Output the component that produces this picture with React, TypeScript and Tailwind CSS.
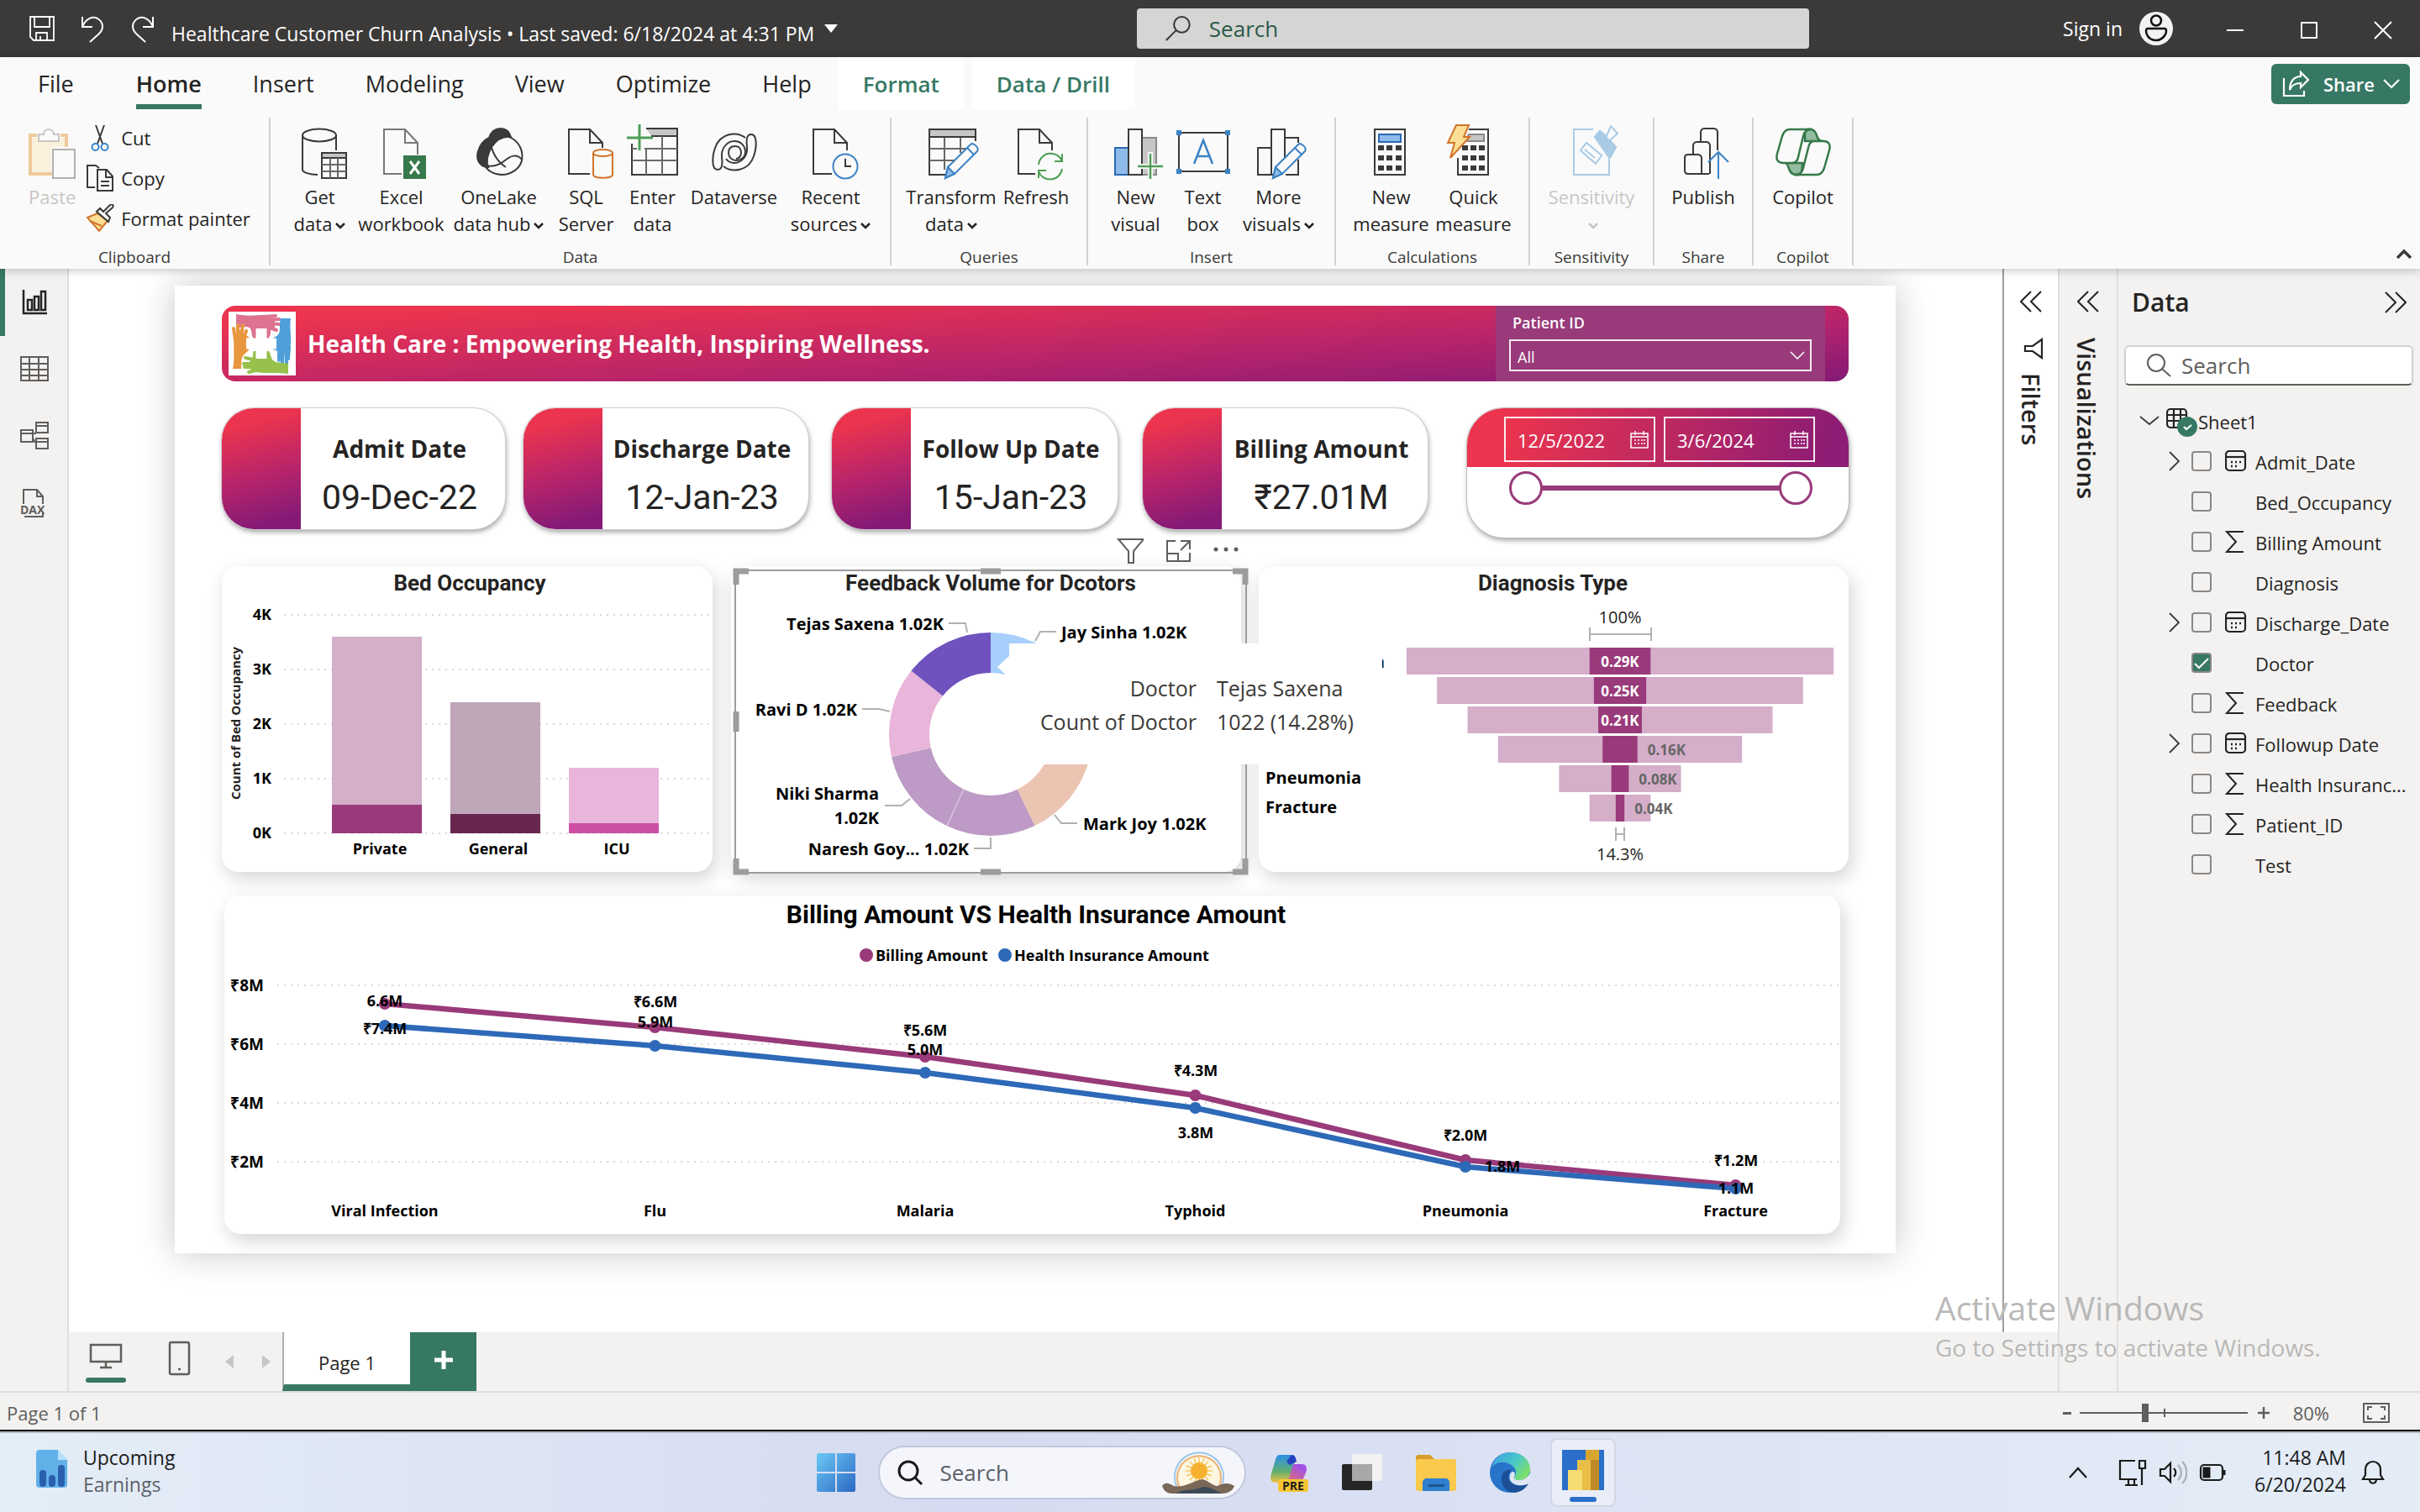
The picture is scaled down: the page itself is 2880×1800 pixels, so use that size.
import React from "react";

type Kids = { children: React.ReactNode };
const INK = "#3b3a39";
const BLUE = "#3b82c4";
const GREEN = "#377865";

/* ---------- ribbon icons, all on a 64 x 64 grid ---------- */

function Big({ children }: Kids) {
  return (
    <svg viewBox="0 0 64 64" className="h-16 w-16 shrink-0 overflow-visible" fill="none" stroke={INK} strokeWidth="2" aria-hidden="true">
      {children}
    </svg>
  );
}

const DocPath = ({ stroke = INK }: { stroke?: string }) => (
  <g stroke={stroke}>
    <path d="M32 57H11V4h25l15 16v14" />
    <path d="M36 4v16h15" />
  </g>
);

const Pencil = () => (
  <g stroke={BLUE}>
    <path d="M25 62l3-13 27-27c3-3 11 4 8 8L36 57z" fill="#fafafa" />
    <path d="M25 62l3-13 8 8z" fill="#8ebbe8" />
    <path d="M51 26l8 8" />
  </g>
);

const Icons = {
  paste: (
    <Big>
      <path d="M14 11H6v46h26M42 11h7v14" stroke="#f0c99b" strokeWidth="4" />
      <path d="M8 14h39v11H31v30H8z" fill="#faf0dc" stroke="none" />
      <path d="M16 18v-8h6c0-8 12-8 12 0h6v8z" fill="#fafafa" stroke="#c8c6c4" />
      <path d="M33 28h26v34H33z" stroke="#b3b0ad" fill="#fafafa" />
    </Big>
  ),
  getData: (
    <Big>
      <ellipse cx="31" cy="11" rx="20" ry="7.5" />
      <path d="M11 11v41c0 3 8 6 18 6M51 11v18" />
      <rect x="34" y="32" width="29" height="30" fill="#fafafa" />
      <rect x="34" y="32" width="29" height="6" fill="#c8c6c4" />
      <path d="M34 46h29M34 54h29M44 38v24M53 38v24" stroke="#6b6967" />
    </Big>
  ),
  excel: (
    <Big>
      <DocPath stroke="#797775" />
      <rect x="34" y="35" width="27" height="28" fill="#36794a" stroke="none" />
      <path d="M42 42l11 15M53 42L42 57" stroke="#fff" strokeWidth="3" />
    </Big>
  ),
  oneLake: (
    <Big>
      <path d="M20 14C23 5 29 3 34 3c6 0 10 4 12 10-9-1-17 3-23 12-5 9-7 17-4 24C9 49 4 40 7 30c2-7 7-13 13-16z" fill={INK} />
      <path d="M22 22C28 13 40 10 48 15c9 6 13 16 11 26-2 9-12 17-24 17-9 0-17-5-20-11" />
      <path d="M22 18c0 11 7 24 18 31M16 47c7 2 16 0 23-6 6-5 14-9 20-1" />
    </Big>
  ),
  sql: (
    <Big>
      <path d="M36 57H11V4h25l15 16v6M36 4v16h15" />
      <g stroke="#d2742a">
        <path d="M40 32v26c0 5 23 5 23 0V32" fill="#fafafa" />
        <ellipse cx="51.500" cy="32" rx="11.500" ry="4" fill="#fafafa" />
      </g>
    </Big>
  ),
  enterData: (
    <Big>
      <path d="M24 3h37v9H30" fill="#c8c6c4" />
      <path d="M7 21v37h54V4" />
      <path d="M22 27h39M7 41h54M24 28v30M43 12v46M7 27h6" stroke="#6b6967" />
      <path d="M16-2v31M1 14h31" stroke="#4f9e56" strokeWidth="3" />
    </Big>
  ),
  dataverse: (
    <Big>
      <path d="M45 14C35 6 15 8 9 26c-4 12-4 26 3 26 6 0 6-8 5-15-1-10 6-19 15-19 8 0 13 6 13 13 0 6-5 10-11 10-5 0-9-4-9-9s3-8 8-8" />
      <path d="M19 48c10 8 30 6 36-12 4-12 4-26-3-26-6 0-6 8-5 15 1 10-6 19-15 19-4 0-8-2-10-5" />
      <path d="M33 24c5 0 7 4 7 8s-3 7-6 7" />
    </Big>
  ),
  recent: (
    <Big>
      <path d="M33 57H11V4h25l15 16v9M36 4v16h15" />
      <circle cx="49" cy="48" r="14.500" stroke={BLUE} />
      <path d="M49 39v9h7" />
    </Big>
  ),
  transform: (
    <Big>
      <path d="M25 58H6V12M61 12v6" />
      <path d="M6 27h44M6 41h30M24 12v40M43 12v20" stroke="#6b6967" />
      <rect x="6" y="4" width="55" height="9" fill="#c8c6c4" />
      <Pencil />
    </Big>
  ),
  refresh: (
    <Big>
      <path d="M31 57H11V4h25l15 16v9M36 4v16h15" />
      <g stroke="#4f9e56">
        <path d="M35 46a14.500 14.500 0 0 1 28-4M63 33v9h-9M63 51a14.500 14.500 0 0 1-28 3M35 62v-9h9" />
      </g>
    </Big>
  ),
  newVisual: (
    <Big>
      <rect x="39" y="14" width="17" height="44" fill="#c8c6c4" stroke="#8a8886" />
      <rect x="7" y="26" width="16" height="32" fill="#8ebbe8" stroke="#2b68b8" />
      <rect x="23" y="4" width="16" height="54" fill="#fafafa" />
      <path d="M49 31v32M35 48h30" stroke="#fafafa" strokeWidth="6" />
      <path d="M49 33v30M34 48h30" stroke="#4f9e56" strokeWidth="2.500" />
    </Big>
  ),
  textBox: (
    <Big>
      <rect x="3" y="8" width="58" height="46" />
      <g fill={BLUE} stroke="none">
        <path d="M0 5h6v6H0zM58 5h6v6h-6zM0 51h6v6H0zM58 51h6v6h-6z" />
      </g>
      <path d="M21 45L32 17l11 28M25 36h14" stroke={BLUE} strokeWidth="2.500" />
    </Big>
  ),
  moreVisuals: (
    <Big>
      <path d="M23 58H7V26h16M23 58V4h16v40M23 58h6M39 14h16v6M55 40v18H40" />
      <Pencil />
    </Big>
  ),
  calc: (
    <Big>
      <rect x="12" y="4" width="36" height="54" />
      <rect x="17" y="10" width="26" height="9" fill="#8ebbe8" stroke="#2b68b8" />
      <path d="M16 26h7M26 26h7M37 26h7M16 38h7M26 38h7M37 38h7M16 50h7M26 50h7M37 50h7" strokeWidth="6" />
    </Big>
  ),
  quick: (
    <Big>
      <path d="M26 4h23v54H13V38" />
      <path d="M26 10h18v8H22z" fill="#c8c6c4" stroke="#8a8886" />
      <path d="M18 26h7M28 26h7M38 26h7M18 38h7M28 38h7M38 38h7M18 50h7M28 50h7M38 50h7" strokeWidth="6" />
      <path d="M11-1h15l-6 14h7L4 38l5-18H1z" fill="#fbdf94" stroke="#d2742a" />
    </Big>
  ),
  sensitivity: (
    <Big>
      <g stroke="#a9cbe6">
        <path d="M34 4H11v54h42V34" />
        <path d="M19 29l7-9 18 15-7 10zM24 28l12 10" />
        <path d="M36 13l6-7 8 6 5-12 8 9-9 8 7 8-8 13z" fill="#fafafa" />
        <path d="M36 13l6-7 19 19-6 12z" fill="#a9cbe6" />
      </g>
    </Big>
  ),
  publish: (
    <Big>
      <path d="M29 57H14c-2 0-4-1-4-4V38c0-2 1-4 4-4h12c2 0 4 2 4 4v19h9M20 34V23c0-2 2-4 4-4h12c2 0 4 2 4 4v34M29 19V7c0-2 2-4 4-4h12c2 0 4 2 4 4v22" />
      <path d="M50 63V31M38 43l12-12 12 12" stroke={BLUE} />
    </Big>
  ),
  copilot: (
    <Big>
      <g stroke="#36794a" strokeWidth="2.500">
        <path d="M34 5c8-3 12 0 14 6 1 4 4 8 8 7H34z" fill="#93bda0" />
        <path d="M30 57c-8 3-13 0-15-6-1-4-3-8-6-7h22z" fill="#93bda0" />
        <path d="M16 4h26c-6 0-9 3-10 8l-6 25c-1 5-3 7-7 7H8c-6 0-9-4-7-11l6-21c2-6 5-8 9-8z" fill="#fafafa" />
        <path d="M48 58H22c6 0 9-3 10-8l6-24c1-5 3-8 7-8h11c6 0 9 4 7 11l-6 21c-2 6-5 8-9 8z" fill="#fafafa" />
      </g>
    </Big>
  ),
};

const Caret = () => (
  <svg viewBox="0 0 12 8" className="ml-1 inline-block h-2 w-3" fill="none" stroke="currentColor" strokeWidth="2.500" aria-hidden="true">
    <path d="M1 1l5 5 5-5" />
  </svg>
);

function RibbonButton({ icon, top, bottom, caret, width, disabled }: { icon: React.ReactNode; top: string; bottom?: string; caret?: boolean; width: string; disabled?: boolean }) {
  return (
    <button type="button" disabled={disabled} className={`${width} flex shrink-0 flex-col items-center pt-2.5 text-[22px] leading-8 whitespace-nowrap ${disabled ? "text-[#c8c6c4]" : "text-[#252423]"}`}>
      {icon}
      <span className="mt-1">{top}</span>
      <span>
        {bottom}
        {caret && <Caret />}
      </span>
    </button>
  );
}

function Group({ label, width, children }: Kids & { label: string; width: string }) {
  return (
    <section aria-label={label} className={`${width} flex h-44 shrink-0 flex-col border-r-2 border-[#d2d0ce]`}>
      <div className="flex flex-1 justify-center">{children}</div>
      <div className="h-6 text-center text-[19px] leading-7 text-[#3b3a39]">{label}</div>
    </section>
  );
}

function TitleBar() {
  return (
    <header className="flex h-[68px] shrink-0 items-center bg-[#3b3a39] text-[23px] text-white">
      <div className="flex flex-[1342] items-center pl-8">
        <button type="button" aria-label="Save" className="mr-6">
          <svg viewBox="0 0 36 36" className="size-9" fill="none" stroke="white" strokeWidth="1.800">
            <path d="M4 4h28v28H8l-4-4zM9 4v12h18V4M11 32v-9h13v9M16 32v-5" />
          </svg>
        </button>
        <button type="button" aria-label="Undo" className="mr-6">
          <svg viewBox="0 0 36 36" className="size-9" fill="none" stroke="white" strokeWidth="2">
            <path d="M6 4v12h12M6 16C10 6 18 3 24 6c7 4 8 12 2 18L15 34" />
          </svg>
        </button>
        <button type="button" aria-label="Redo">
          <svg viewBox="0 0 36 36" className="size-9" fill="none" stroke="white" strokeWidth="2">
            <path d="M30 4v12H18M30 16C26 6 18 3 12 6c-7 4-8 12-2 18l11 10" />
          </svg>
        </button>
        <h1 className="ml-4 pt-3 whitespace-nowrap">Healthcare Customer Churn Analysis&nbsp;•&nbsp;Last saved: 6/18/2024 at 4:31 PM</h1>
        <svg viewBox="0 0 16 10" className="ml-3 h-2.5 w-4" fill="white" aria-hidden="true">
          <path d="M0 0h16L8 10z" />
        </svg>
      </div>
      <label className="flex h-12 w-[800px] items-center rounded-sm bg-[#d5d5d3] pl-8">
        <svg viewBox="0 0 36 36" className="size-9" fill="none" stroke="#3b3a39" strokeWidth="2.200" aria-hidden="true">
          <circle cx="23" cy="13" r="10" />
          <path d="M16 20L3 33" />
        </svg>
        <input aria-label="Search" placeholder="Search" className="ml-5 w-full bg-transparent text-[26px] outline-none placeholder:text-[#2c5a4c]" />
      </label>
      <div className="flex flex-[738] items-center justify-end">
        <button type="button" className="mr-[30px] flex items-center gap-5">
          Sign in
          <svg viewBox="0 0 40 40" className="size-10" fill="none" stroke="#111" strokeWidth="2.500" aria-hidden="true">
            <circle cx="20" cy="20" r="20" fill="#f3f2f1" stroke="none" />
            <circle cx="20" cy="10.500" r="6" />
            <path d="M10 20h20c3 0 2 5 1 7-3 5-6 7-11 7s-9-2-11-7c-1-2-2-7 1-7z" />
          </svg>
        </button>
        {[
          ["Minimize", "M10 20h20"],
          ["Restore", "M11 11h18v18H11z"],
          ["Close", "M10 10l20 20M30 10L10 30"],
        ].map(([name, d]) => (
          <button key={name} type="button" aria-label={name} className="flex w-[88px] justify-center pt-1">
            <svg viewBox="0 0 40 40" className="size-10" fill="none" stroke="white" strokeWidth="2" strokeLinejoin="round">
              <path d={d} />
            </svg>
          </button>
        ))}
      </div>
    </header>
  );
}

const tabs = ["File", "Home", "Insert", "Modeling", "View", "Optimize", "Help"];

function Ribbon() {
  return (
    <div className="z-10 flex h-[252px] shrink-0 flex-col bg-[#fafafa] shadow-[0_2px_10px_rgba(0,0,0,0.22)]">
      <nav className="flex h-[62px] items-stretch pl-4 text-[27px] text-[#252423]">
        {tabs.map((t) => (
          <button key={t} type="button" className={`px-[29px] ${t === "File" ? "mr-4" : t === "Help" ? "mr-0.5" : "mr-[3px]"} ${t === "Home" ? "font-semibold" : ""}`}>
            <span className={`flex h-full items-center border-b-[6px] pt-2 ${t === "Home" ? "border-[#377865]" : "border-transparent"}`}>{t}</span>
          </button>
        ))}
        <button type="button" className="mr-2 bg-white px-[30px] pt-0.5 text-[26px] font-semibold text-[#377865]">Format</button>
        <button type="button" className="bg-white px-[30px] pt-0.5 text-[26px] font-semibold text-[#377865]">Data / Drill</button>
        <button type="button" className="mt-2 mr-3 ml-auto flex h-12 items-center rounded-md bg-[#377865] px-3 text-[22px] font-semibold text-white">
          <svg viewBox="0 0 36 36" className="mr-3.5 size-9" fill="none" stroke="white" strokeWidth="2.200" aria-hidden="true">
            <path d="M3 11v21h24v-6" />
            <path d="M23 4l9 9-9 9v-5c-8 0-11 3-13 8 0-10 5-16 13-16z" />
          </svg>
          Share
          <svg viewBox="0 0 20 12" className="ml-2.5 h-3 w-5" fill="none" stroke="white" strokeWidth="2.200" aria-hidden="true">
            <path d="M1 1l9 9 9-9" />
          </svg>
        </button>
      </nav>
      <div className="flex flex-1 items-start pt-2.5">
        <Group label="Clipboard" width="w-[322px]">
          <RibbonButton icon={Icons.paste} top="Paste" width="w-20" disabled />
          <div className="flex flex-col text-[22px] text-[#252423]">
            <button type="button" className="flex h-12 items-center gap-2">
              <svg viewBox="0 0 34 34" className="size-[34px]" fill="none" stroke={INK} strokeWidth="2" aria-hidden="true">
                <path d="M12 2l8 22M22 2l-8 22" />
                <circle cx="11.500" cy="28" r="4" stroke={BLUE} />
                <circle cx="22.500" cy="28" r="4" stroke={BLUE} />
              </svg>
              Cut
            </button>
            <button type="button" className="flex h-12 items-center gap-2">
              <svg viewBox="0 0 34 34" className="size-[34px]" fill="none" stroke={INK} strokeWidth="2" aria-hidden="true">
                <path d="M11 28H2V2h10l4 3M14 7h11l7 8v17H14zM24 7v9h8M18 21h10M18 26h10" />
              </svg>
              Copy
            </button>
            <button type="button" className="flex h-12 items-center gap-2 whitespace-nowrap">
              <svg viewBox="0 0 34 34" className="size-[34px]" fill="none" stroke={INK} strokeWidth="2" aria-hidden="true">
                <path d="M2 16l12-5 12 9-10 12z" fill="#fbdf94" stroke="#d2742a" />
                <path d="M5 20l14 6" stroke="#d2742a" />
                <path d="M13 9l14 12 2-5-5-5 8-7c2-3-1-5-3-3l-8 8-4-4z" fill="#fafafa" />
              </svg>
              Format painter
            </button>
          </div>
        </Group>
        <Group label="Data" width="w-[739px]">
          <RibbonButton icon={Icons.getData} top="Get" bottom="data" caret width="w-[92px]" />
          <RibbonButton icon={Icons.excel} top="Excel" bottom="workbook" width="w-[102px]" />
          <RibbonButton icon={Icons.oneLake} top="OneLake" bottom="data hub" caret width="w-[130px]" />
          <RibbonButton icon={Icons.sql} top="SQL" bottom="Server" width="w-[78px]" />
          <RibbonButton icon={Icons.enterData} top="Enter" bottom="data" width="w-[80px]" />
          <RibbonButton icon={Icons.dataverse} top="Dataverse" width="w-[114px]" />
          <RibbonButton icon={Icons.recent} top="Recent" bottom="sources" caret width="w-[116px]" />
        </Group>
        <Group label="Queries" width="w-[234px]">
          <RibbonButton icon={Icons.transform} top="Transform" bottom="data" caret width="w-[112px]" />
          <RibbonButton icon={Icons.refresh} top="Refresh" width="w-[90px]" />
        </Group>
        <Group label="Insert" width="w-[295px]">
          <RibbonButton icon={Icons.newVisual} top="New" bottom="visual" width="w-[80px]" />
          <RibbonButton icon={Icons.textBox} top="Text" bottom="box" width="w-[80px]" />
          <RibbonButton icon={Icons.moreVisuals} top="More" bottom="visuals" caret width="w-[100px]" />
        </Group>
        <Group label="Calculations" width="w-[231px]">
          <RibbonButton icon={Icons.calc} top="New" bottom="measure" width="w-[98px]" />
          <RibbonButton icon={Icons.quick} top="Quick" bottom="measure" width="w-[98px]" />
        </Group>
        <Group label="Sensitivity" width="w-[148px]">
          <RibbonButton icon={Icons.sensitivity} top="Sensitivity" caret width="w-[120px]" disabled />
        </Group>
        <Group label="Share" width="w-[118px]">
          <RibbonButton icon={Icons.publish} top="Publish" width="w-[100px]" />
        </Group>
        <Group label="Copilot" width="w-[119px]">
          <RibbonButton icon={Icons.copilot} top="Copilot" width="w-[100px]" />
        </Group>
        <button type="button" aria-label="Collapse the ribbon" className="mr-2.5 mb-3 ml-auto self-end">
          <svg viewBox="0 0 18 12" className="h-3 w-[18px]" fill="none" stroke={INK} strokeWidth="3.500">
            <path d="M1 11l8-8 8 8" />
          </svg>
        </button>
      </div>
    </div>
  );
}

function LeftRail() {
  const icons: [string, React.ReactNode][] = [
    ["Report view", <path key="a" strokeWidth="2.500" d="M5 4v28h28M10 28V16h5v12zM18 28V12h5v16zM26 28V6h5v22z" />],
    ["Table view", <path key="b" d="M2 4h32v28H2zM2 12h32M2 19h32M2 26h32M12 4v28M23 4v28" />],
    ["Model view", <path key="c" d="M2 11h14v14H2zM2 15h14M20 2h14v12H20zM20 6h14M20 21h14v12H20zM20 25h14M16 15h4M16 21l4 6" />],
    ["DAX query view", <g key="d"><path d="M5 19V2h16l7 8v9M21 2v8h7M6 34h22v-6" /><text x="1" y="31" fontSize="14" fontWeight="700" stroke="none" fill="#605e5c">DAX</text></g>],
  ];
  return (
    <nav aria-label="Views" className="flex w-[82px] shrink-0 flex-col border-r-2 border-[#e1dfdd] bg-[#f3f2f1]">
      {icons.map(([name, d], i) => (
        <button key={name} type="button" aria-label={name} className={`flex h-20 items-center justify-center border-l-[6px] pr-1 pb-0.5 ${i === 0 ? "border-[#377865]" : "border-transparent"}`}>
          <svg viewBox="0 0 36 36" className="size-9 overflow-visible" fill="none" stroke={i === 0 ? "#252423" : "#605e5c"} strokeWidth="2">
            {d}
          </svg>
        </button>
      ))}
    </nav>
  );
}

/* ---------- report visuals ---------- */

const hands = (
  <svg viewBox="0 0 80 76" className="h-[76px] w-20 shrink-0 bg-white" aria-hidden="true">
    <g strokeLinecap="round" strokeLinejoin="round" strokeWidth="4" fill="none">
      <path d="M9 3c14 3 24 1 36 1l10 6v10l-5 2c0 4 0 8-3 10H30c-3-3-2-8-4-12-4-3-9-2-17 0z" fill="#dd7391" />
      <path d="M42 6l14-1M44 10l16-1M46 14l15 1M46 18l11 4" stroke="#dd7391" />
      <path d="M62 8h12c-2 12 2 24-1 36l-5 6-9-3-6-2V31c3-1 5-2 7-5 2-5 0-11 2-18z" fill="#4f9fd8" />
      <path d="M60 46v12M64 46v16M68 46l1 16M72 42l-1 14" stroke="#4f9fd8" />
      <path d="M71 74V62c-7-2-14 0-18-4-3-3-3-8-5-11H30c-2 4 0 7-3 10l-6 9 12 6c12 2 26 0 38 2z" fill="#97c04c" />
      <path d="M34 58l-14-3M33 62H18M33 66l-14 0M36 69l-12 3" stroke="#97c04c" />
      <path d="M5 68h10c1-8-1-12 3-16 2-3 4-4 6-6V30c-3-2-6-3-8-5l-3-4-6 8c-2 14 1 26-2 39z" fill="#e8973f" />
      <path d="M8 34L6 20M11 30V16M15 30l2-14M18 32l3-9" stroke="#e8973f" />
      <path d="M39 20v36M21 38h36" stroke="white" strokeWidth="13" strokeLinecap="butt" />
    </g>
  </svg>
);

const CalendarIcon = () => (
  <svg viewBox="0 0 22 22" className="size-[22px] shrink-0" fill="none" stroke="white" strokeWidth="1.500" aria-hidden="true">
    <path d="M1 4h20v17H1zM1 8h20M6 1v5M16 1v5M6 11v2M10 11v2M14 11v2M17 11v2M6 15v2M10 15v2M14 15v2M17 15v2" />
  </svg>
);

function Kpi({ title, value, className }: { title: string; value: string; className: string }) {
  return (
    <section className={`${className} flex h-36 overflow-hidden rounded-[38px] bg-white shadow-[0_0_0_1px_#cfcfcf,1px_3px_6px_rgba(0,0,0,0.4)]`}>
      <div className="w-[94px] shrink-0 bg-linear-[165deg] from-[#ec344e] from-15% via-[#b8246a] via-55% to-[#851a76] to-90%" />
      <div className="flex flex-1 flex-col items-center pt-[26px] pr-2 text-[#252423]">
        <h2 className="text-[28px] leading-11 font-bold whitespace-nowrap">{title}</h2>
        <p className="pt-2 font-[Roboto] text-[41px] leading-14">{value}</p>
      </div>
    </section>
  );
}

const thumb =
  "pointer-events-none absolute inset-x-0 h-10 w-full appearance-none bg-transparent [&::-webkit-slider-thumb]:pointer-events-auto [&::-webkit-slider-thumb]:size-10 [&::-webkit-slider-thumb]:appearance-none [&::-webkit-slider-thumb]:rounded-full [&::-webkit-slider-thumb]:border-[3px] [&::-webkit-slider-thumb]:border-[#993a7a] [&::-webkit-slider-thumb]:bg-white";

function DateSlicer() {
  return (
    <section className="ml-[47px] flex h-[154px] flex-[454] flex-col overflow-hidden rounded-[44px] bg-white shadow-[0_0_0_1px_#bdbdbd,1px_3px_6px_rgba(0,0,0,0.4)]">
      <div className="flex h-[70px] items-center justify-center gap-2.5 bg-linear-[100deg] from-[#ec344e] from-10% to-[#8c1c74] to-95% pt-1 pl-1">
        {["12/5/2022", "3/6/2024"].map((d, i) => (
          <label key={d} className="flex h-[54px] w-[180px] items-center border-2 border-white/90 pr-1.5 pl-3.5">
            <input aria-label={i === 0 ? "Start date" : "End date"} defaultValue={d} className="w-full min-w-0 bg-transparent pt-0.5 text-[22px] text-white outline-none" />
            <CalendarIcon />
          </label>
        ))}
      </div>
      <div className="relative mt-[5px] mr-[43px] ml-[50px] h-10">
        <div className="absolute inset-x-5 top-[17px] h-1.5 bg-[#993a7a]" />
        <input type="range" aria-label="Range start" defaultValue={0} className={thumb} />
        <input type="range" aria-label="Range end" defaultValue={100} className={thumb} />
      </div>
    </section>
  );
}

const card = "rounded-[20px] bg-white shadow-[4px_8px_22px_rgba(0,0,0,0.17)]";
const dinTitle = { fontFamily: "Roboto, sans-serif", fontWeight: 700, fill: "#252423", textAnchor: "middle" as const };

function BedOccupancy() {
  const bars = [
    { name: "Private", x: 395, top: 758, split: 958, light: "#d5aeca", dark: "#993a7a" },
    { name: "General", x: 536, top: 836, split: 969, light: "#bfa6b9", dark: "#67274f" },
    { name: "ICU", x: 677, top: 914, split: 980, light: "#e9b5da", dark: "#cc4fa3" },
  ];
  return (
    <section className={`flex-[584] ${card}`}>
      <svg viewBox="264 674 584 364" className="block w-full" role="img" aria-label="Bed Occupancy">
        <text x="559" y="703" fontSize="26" {...dinTitle}>Bed Occupancy</text>
        {["4K", "3K", "2K", "1K", "0K"].map((t, i) => (
          <g key={t}>
            <text x="323" y={738 + i * 65} fontSize="18" fontWeight="700" textAnchor="end">{t}</text>
            <path d={`M338 ${732 + i * 65}H846`} stroke="#dad8d6" strokeWidth="2" strokeDasharray="2 6" />
          </g>
        ))}
        {bars.map((b) => (
          <g key={b.name}>
            <rect x={b.x} y={b.top} width="107" height={b.split - b.top} fill={b.light} />
            <rect x={b.x} y={b.split} width="107" height={992 - b.split} fill={b.dark} />
            <text x={b.x + 57} y="1017" fontSize="18" fontWeight="700" textAnchor="middle">{b.name}</text>
          </g>
        ))}
        <text transform="translate(286 861) rotate(-90)" fontSize="15" fontWeight="700" textAnchor="middle" fill="#252423">Count of Bed Occupancy</text>
      </svg>
    </section>
  );
}

function arc(i: number) {
  const cx = 1179, cy = 874, R = 121, r = 73;
  const p = (rad: number, k: number) => {
    const a = (k * 2 * Math.PI) / 7 - Math.PI / 2;
    return `${(cx + rad * Math.cos(a)).toFixed(1)} ${(cy + rad * Math.sin(a)).toFixed(1)}`;
  };
  return `M${p(R, i)}A${R} ${R} 0 0 1 ${p(R, i + 1)}L${p(r, i + 1)}A${r} ${r} 0 0 0 ${p(r, i)}Z`;
}

function Feedback() {
  const colors = ["#a8cffb", "#a8cffb", "#ecc5b2", "#bd9bc6", "#bd9bc6", "#e9b5da", "#6f52bd"];
  const labels: [number, number, string, "start" | "end"][] = [
    [1123, 750, "Tejas Saxena 1.02K", "end"],
    [1263, 760, "Jay Sinha 1.02K", "start"],
    [1289, 988, "Mark Joy 1.02K", "start"],
    [1020, 852, "Ravi D 1.02K", "end"],
    [1046, 952, "Niki Sharma", "end"],
    [1046, 981, "1.02K", "end"],
    [1153, 1018, "Naresh Goy... 1.02K", "end"],
  ];
  return (
    <section className={`relative ml-[22px] flex-[607] ${card}`}>
      <svg viewBox="870 674 607 364" className="block w-full overflow-visible" role="img" aria-label="Feedback Volume for Dcotors">
        <text x="1179" y="703" fontSize="26" {...dinTitle}>Feedback Volume for Dcotors</text>
        {colors.map((c, i) => (
          <path key={i} d={arc(i)} fill={c} />
        ))}
        <path d="M1147 939l-20 44" stroke="#d9c3de" strokeWidth="1.500" />
        <g fill="none" stroke="#b3b0ad" strokeWidth="2">
          <path d="M1129 742h20l2 11M1257 752h-19l-6 11M1026 844h20l13 3M1053 959h20l10-8M1159 1010h20v-13M1282 980h-19l-8-10" />
        </g>
        {labels.map(([x, y, t, a]) => (
          <text key={t + y} x={x} y={y} fontSize="20" fontWeight="700" textAnchor={a}>{t}</text>
        ))}
        <g fill="none" stroke="#9c9c9c">
          <rect x="875" y="679" width="608" height="360" strokeWidth="2" />
          <path strokeWidth="7" d="M876 696v-16h15M1467 680h15v16M1482 1022v16h-15M891 1038h-15v-16M1167 680h24M1167 1038h24M876 847v24" />
        </g>
      </svg>
      <div className="absolute -top-[38px] left-[453px] flex gap-5">
        <button type="button" aria-label="Filters on visual">
          <svg viewBox="0 0 38 36" className="h-9 w-[38px]" fill="none" stroke="#605e5c" strokeWidth="2">
            <path d="M8 6h30L26 20v14h-6V20z" />
          </svg>
        </button>
        <button type="button" aria-label="Focus mode">
          <svg viewBox="0 0 38 36" className="h-9 w-[38px]" fill="none" stroke="#605e5c" strokeWidth="2">
            <path d="M18 8H8v24h27V22M24 8h11v10M35 8L24 19M8 23h13v9" />
          </svg>
        </button>
        <button type="button" aria-label="More options">
          <svg viewBox="0 0 38 36" className="h-9 w-[38px]" fill="#605e5c">
            <circle cx="8" cy="18" r="2.500" />
            <circle cx="20" cy="18" r="2.500" />
            <circle cx="32" cy="18" r="2.500" />
          </svg>
        </button>
      </div>
      <div role="tooltip" className="absolute top-[92px] left-[331px] z-10 flex h-36 w-[444px] items-center bg-white text-[25px] leading-10 text-[#3b3a39]">
        <svg viewBox="0 0 15 28" className="absolute top-3.5 -left-3.5 h-7 w-[15px]" fill="white" aria-hidden="true">
          <path d="M15 0v28L0 14z" />
        </svg>
        <dl className="grid w-full grid-cols-[223px_1fr] gap-x-6 pt-0.5 whitespace-nowrap">
          <dt className="text-right">Doctor</dt>
          <dd>Tejas Saxena</dd>
          <dt className="text-right">Count of Doctor</dt>
          <dd>1022 (14.28%)</dd>
        </dl>
      </div>
    </section>
  );
}

function Diagnosis() {
  const rows: [number, string][] = [[7, "0.29K"], [6, "0.25K"], [5, "0.21K"], [4, "0.16K"], [2, "0.08K"], [1, "0.04K"]];
  return (
    <section className={`ml-[21px] flex-[702] ${card}`}>
      <svg viewBox="1498 674 702 364" className="block w-full" role="img" aria-label="Diagnosis Type">
        <text x="1848" y="703" fontSize="26" {...dinTitle}>Diagnosis Type</text>
        <text x="1928" y="742" fontSize="20" textAnchor="middle" fill="#252423">100%</text>
        <path d="M1892 747v16M1965 747v16M1892 755h73M1923 985v16M1933 985v16M1923 993h10" stroke="#b3b0ad" strokeWidth="2" />
        {rows.map(([n, t], i) => {
          const w = n * 72.6, d = w / 7, y = 771 + i * 35;
          return (
            <g key={t}>
              <rect x={1928 - w / 2} y={y} width={w} height="32" fill="#d5aeca" />
              <rect x={1928 - d / 2} y={y} width={d} height="32" fill="#993a7a" />
              <text x={i < 3 ? 1928 : 1940 + d / 2} y={y + 23} fontSize="17" fontWeight="700" textAnchor={i < 3 ? "middle" : "start"} fill={i < 3 ? "white" : "#666666"}>{t}</text>
            </g>
          );
        })}
        <g fontSize="20" fontWeight="700">
          <text x="1648" y="795" textAnchor="end">Viral Infection</text>
          <text x="1506" y="933">Pneumonia</text>
          <text x="1506" y="968">Fracture</text>
        </g>
        <text x="1928" y="1024" fontSize="20" textAnchor="middle" fill="#252423">14.3%</text>
      </svg>
    </section>
  );
}

function BillingLines() {
  const cats = ["Viral Infection", "Flu", "Malaria", "Typhoid", "Pneumonia", "Fracture"];
  const x = (i: number) => 458 + i * 321.5;
  const billing = [1195, 1223, 1258, 1304, 1381, 1411];
  const health = [1221, 1245, 1277, 1319, 1389, 1415];
  const labels: [number, number, string][] = [
    [458, 1198, "6.6M"], [458, 1231, "₹7.4M"], [780, 1199, "₹6.6M"], [780, 1223, "5.9M"], [1101, 1233, "₹5.6M"], [1101, 1256, "5.0M"],
    [1423, 1281, "₹4.3M"], [1423, 1355, "3.8M"], [1744, 1358, "₹2.0M"], [1788, 1395, "1.8M"], [2066, 1388, "₹1.2M"], [2066, 1421, "1.1M"],
  ];
  return (
    <section className={`mt-7 mr-2.5 ml-[3px] ${card}`}>
      <svg viewBox="267 1066 1923 403" className="block w-full" role="img" aria-label="Billing Amount VS Health Insurance Amount">
        <text x="1233" y="1099" fontSize="30" {...dinTitle} fill="black">Billing Amount VS Health Insurance Amount</text>
        <circle cx="1031" cy="1137" r="8" fill="#993a7a" />
        <circle cx="1196" cy="1137" r="8" fill="#2e69b8" />
        {["₹8M", "₹6M", "₹4M", "₹2M"].map((t, i) => (
          <g key={t}>
            <text x="314" y={1180 + i * 70} fontSize="19" fontWeight="700" textAnchor="end">{t}</text>
            <path d={`M330 ${1173 + i * 70}H2188`} stroke="#dad8d6" strokeWidth="2" strokeDasharray="2 6" />
          </g>
        ))}
        {[[billing, "#993a7a"] as const, [health, "#2e69b8"] as const].map(([ys, c]) => (
          <g key={c} fill={c}>
            <polyline points={ys.map((y, i) => `${x(i)},${y}`).join(" ")} fill="none" stroke={c} strokeWidth="6.500" strokeLinejoin="round" />
            {ys.map((y, i) => (
              <circle key={i} cx={x(i)} cy={y} r="7" />
            ))}
          </g>
        ))}
        <g fontSize="18" fontWeight="700">
          <text x="1042" y="1144">Billing Amount</text>
          <text x="1207" y="1144">Health Insurance Amount</text>
          {labels.map(([lx, ly, t]) => (
            <text key={t} x={lx} y={ly} textAnchor="middle">{t}</text>
          ))}
          {cats.map((c, i) => (
            <text key={c} x={x(i)} y="1448" textAnchor="middle">{c}</text>
          ))}
        </g>
      </svg>
    </section>
  );
}

function Report() {
  return (
    <main className="flex-1 bg-white pt-5 pr-[127px] pb-[94px] pl-[126px]">
      <div className="h-full bg-white px-14 pt-6 shadow-[0_0_40px_rgba(0,0,0,0.22)]">
        <div className="flex h-[90px] items-stretch rounded-2xl bg-linear-[177deg] from-[#ec344e] from-10% via-[#b8246a] via-60% to-[#851a76] to-100% pr-7 pl-2">
          <div className="flex items-center">
            {hands}
            <h1 className="ml-3.5 text-[28px] font-bold whitespace-nowrap text-white">Health Care : Empowering Health, Inspiring Wellness.</h1>
          </div>
          <label className="ml-auto flex w-[392px] flex-col bg-[#993a7a] px-4 pt-1 text-[18px] font-semibold text-white">
            <span className="pl-1 leading-8">Patient ID</span>
            <span className="relative mt-1 block">
              <select className="h-[38px] w-full appearance-none border-2 border-white/90 bg-transparent pt-1 pl-2 text-[18px] font-normal">
                <option>All</option>
              </select>
              <svg viewBox="0 0 18 10" className="absolute top-3.5 right-2 h-2.5 w-[18px]" fill="none" stroke="white" strokeWidth="1.500" aria-hidden="true">
                <path d="M1 1l8 8 8-8" />
              </svg>
            </span>
          </label>
        </div>
        <div className="mt-8 flex items-start">
          <Kpi title="Admit Date" value="09-Dec-22" className="flex-[337]" />
          <Kpi title="Discharge Date" value="12-Jan-23" className="ml-[22px] flex-[339]" />
          <Kpi title="Follow Up Date" value="15-Jan-23" className="ml-7 flex-[340]" />
          <Kpi title="Billing Amount" value="₹27.01M" className="ml-[30px] flex-[339]" />
          <DateSlicer />
        </div>
        <div className="mt-[34px] flex items-start">
          <BedOccupancy />
          <Feedback />
          <Diagnosis />
        </div>
        <BillingLines />
      </div>
    </main>
  );
}

function Chevrons({ flip }: { flip?: boolean }) {
  return (
    <svg viewBox="0 0 26 26" className={`size-[26px] ${flip ? "rotate-180" : ""}`} fill="none" stroke="#252423" strokeWidth="2" aria-hidden="true">
      <path d="M13 1L1 13l12 12M25 1L13 13l12 12" />
    </svg>
  );
}

const fields: [string, "date" | "sum" | ""][] = [
  ["Admit_Date", "date"], ["Bed_Occupancy", ""], ["Billing Amount", "sum"], ["Diagnosis", ""], ["Discharge_Date", "date"], ["Doctor", ""],
  ["Feedback", "sum"], ["Followup Date", "date"], ["Health Insuranc...", "sum"], ["Patient_ID", "sum"], ["Test", ""],
];

function DataPane() {
  return (
    <aside aria-label="Data" className="w-[361px] shrink-0 border-l-2 border-[#e1dfdd] bg-[#f3f2f1] text-[22px] text-[#252423]">
      <div className="flex items-center pt-4 pr-4 pl-4">
        <h2 className="flex-1 text-[30px] leading-12 font-semibold">Data</h2>
        <button type="button" aria-label="Collapse pane"><Chevrons flip /></button>
      </div>
      <label className="mt-[27px] mr-2 ml-[7px] flex h-12 items-center rounded-md border-2 border-b-[#605e5c] border-[#d2d0ce] bg-white pl-6">
        <svg viewBox="0 0 30 30" className="size-[30px] shrink-0" fill="none" stroke="#605e5c" strokeWidth="2" aria-hidden="true">
          <circle cx="12" cy="12" r="10" />
          <path d="M19 19l10 9" />
        </svg>
        <input aria-label="Search fields" placeholder="Search" className="ml-3 w-full min-w-0 bg-transparent text-[26px] outline-none placeholder:text-[#605e5c]" />
      </label>
      <div className="mt-[18px] flex h-12 items-center pl-[25px]">
        <svg viewBox="0 0 24 12" className="h-3 w-6" fill="none" stroke="#3b3a39" strokeWidth="1.800" aria-hidden="true">
          <path d="M1 1l11 9L23 1" />
        </svg>
        <svg viewBox="0 0 38 38" className="ml-2 size-[38px]" fill="none" stroke="#252423" strokeWidth="2.200" aria-hidden="true">
          <rect x="1" y="5" width="23" height="22" rx="4" />
          <path d="M1 12h23M1 19h23M9 5v22M17 5v22" />
          <circle cx="25" cy="26" r="12" fill={GREEN} stroke="none" />
          <path d="M21 26l3 3 6-5" stroke="white" />
        </svg>
        <span className="pt-0.5">Sheet1</span>
      </div>
      <ul>
        {fields.map(([name, kind]) => (
          <li key={name} className="flex h-[48px] items-center pl-[60px]">
            <span className="w-[27px] shrink-0">
              {kind === "date" && (
                <svg viewBox="0 0 14 24" className="h-6 w-3.5" fill="none" stroke="#3b3a39" strokeWidth="1.800" aria-hidden="true">
                  <path d="M1 1l11 11L1 23" />
                </svg>
              )}
            </span>
            <label className="flex items-center whitespace-nowrap">
              <span className="relative flex size-6 shrink-0">
                <input type="checkbox" defaultChecked={name === "Doctor"} className="size-6 appearance-none rounded-sm border-2 border-[#8a8886] checked:bg-[#377865]" />
                {name === "Doctor" && (
                  <svg viewBox="0 0 24 24" className="pointer-events-none absolute inset-0 size-6" fill="none" stroke="white" strokeWidth="2" aria-hidden="true">
                    <path d="M4 13l5 5L20 7" />
                  </svg>
                )}
              </span>
              <span className="ml-4 w-9 shrink-0">
                {kind === "sum" && (
                  <svg viewBox="0 0 24 26" className="h-[26px] w-6" fill="none" stroke="#252423" strokeWidth="2" aria-hidden="true">
                    <path d="M22 1H2l11 12L2 25h20" />
                  </svg>
                )}
                {kind === "date" && (
                  <svg viewBox="0 0 26 26" className="size-[26px]" fill="none" stroke="#252423" strokeWidth="2.200" aria-hidden="true">
                    <rect x="1" y="1" width="23" height="23" rx="4" />
                    <path d="M1 8h23" />
                    <path d="M7 14h2M12 14h2M17 14h2M7 19h2M12 19h2" strokeWidth="2.500" />
                  </svg>
                )}
              </span>
              <span className="pt-0.5">{name}</span>
            </label>
          </li>
        ))}
      </ul>
    </aside>
  );
}

function PageTabs() {
  return (
    <div className="flex h-[70px] shrink-0 items-stretch bg-[#f3f2f1]">
      <button type="button" aria-label="Desktop layout" className="ml-5 flex w-12 flex-col items-center pt-3">
        <svg viewBox="0 0 40 32" className="h-8 w-10" fill="none" stroke="#605e5c" strokeWidth="2.500" aria-hidden="true">
          <path d="M2 3h36v20H2zM20 23v6M13 30h14" />
        </svg>
        <span className="mt-2.5 h-1.5 w-full rounded-full bg-[#377865]" />
      </button>
      <button type="button" aria-label="Mobile layout" className="ml-[50px]">
        <svg viewBox="0 0 28 42" className="mb-2 h-[42px] w-7" fill="none" stroke="#605e5c" strokeWidth="2.500" aria-hidden="true">
          <rect x="2" y="2" width="23" height="38" rx="2" />
          <path d="M12 34h3" />
        </svg>
      </button>
      <button type="button" aria-label="Previous page" className="ml-10" disabled>
        <svg viewBox="0 0 10 16" className="h-4 w-2.5" fill="#c8c6c4"><path d="M10 0v16L0 8z" /></svg>
      </button>
      <button type="button" aria-label="Next page" className="mr-3.5 ml-[34px]" disabled>
        <svg viewBox="0 0 10 16" className="h-4 w-2.5" fill="#c8c6c4"><path d="M0 0v16l10-8z" /></svg>
      </button>
      <button type="button" className="w-[152px] border-b-8 border-l-2 border-b-[#377865] border-l-[#b3b0ad] bg-white pt-2.5 text-[22px] text-[#252423]">Page 1</button>
      <button type="button" aria-label="New page" className="flex w-[79px] justify-center bg-[#377865] pt-[22px]">
        <svg viewBox="0 0 22 22" className="size-[22px]" stroke="white" strokeWidth="5"><path d="M11 0v22M0 11h22" /></svg>
      </button>
    </div>
  );
}

function StatusBar() {
  return (
    <footer className="flex h-[48px] shrink-0 items-center border-t-2 border-b-2 border-t-[#e1dfdd] border-b-black bg-[#f3f2f1] pt-1 pr-9 pl-2 text-[22px] text-[#605e5c]">
      <span className="flex-1">Page 1 of 1</span>
      <button type="button" aria-label="Zoom out" className="mr-2.5 h-[3px] w-2.5 bg-[#605e5c]" />
      <span className="relative flex h-6 w-[200px] items-center">
        <span className="absolute inset-x-0 h-0.5 bg-[#605e5c]" />
        <span className="absolute left-1/2 h-2.5 w-0.5 bg-[#605e5c]" />
        <input type="range" aria-label="Zoom" min={10} max={180} defaultValue={76} className="absolute h-6 w-full appearance-none bg-transparent [&::-webkit-slider-thumb]:h-[22px] [&::-webkit-slider-thumb]:w-2 [&::-webkit-slider-thumb]:appearance-none [&::-webkit-slider-thumb]:bg-[#605e5c]" />
      </span>
      <button type="button" aria-label="Zoom in" className="mr-7 ml-3">
        <svg viewBox="0 0 14 14" className="size-3.5" stroke="#605e5c" strokeWidth="2.500"><path d="M7 0v14M0 7h14" /></svg>
      </button>
      <span>80%</span>
      <button type="button" aria-label="Fit to page" className="ml-10">
        <svg viewBox="0 0 32 26" className="h-[26px] w-8" fill="none" stroke="#605e5c" strokeWidth="2">
          <path d="M1 2h30v22H1zM6 10V6h5M21 6h5v4M26 16v4h-5M11 20H6v-4" />
        </svg>
      </button>
    </footer>
  );
}

function TaskIcon({ name, children }: Kids & { name: string }) {
  return (
    <button type="button" aria-label={name} className="flex w-22 items-center justify-center">
      <svg viewBox="0 0 48 48" className="size-12 overflow-visible" aria-hidden="true">{children}</svg>
    </button>
  );
}

function Taskbar() {
  return (
    <footer className="flex h-[96px] shrink-0 items-stretch border-t-2 border-[#b4b8c4] bg-linear-90 from-[#e4eef7] via-[#d6dbf1] via-40% to-[#e4edf7] text-[23px] text-[#1b1b1b]">
      <svg width="0" height="0" className="absolute" aria-hidden="true">
        <defs>
          <linearGradient id="win" x1="0" y1="0" x2="1" y2="1"><stop offset="0" stopColor="#6cc8f5" /><stop offset="1" stopColor="#2b69c4" /></linearGradient>
          <linearGradient id="edge" x1="0" y1="0" x2="1" y2="0.600"><stop offset="0" stopColor="#3a9de0" /><stop offset="0.600" stopColor="#4cc8c8" /><stop offset="1" stopColor="#7be069" /></linearGradient>
          <linearGradient id="cop" x1="0" y1="0" x2="0" y2="1"><stop offset="0" stopColor="#2b8ee8" /><stop offset="0.600" stopColor="#62b070" /><stop offset="1" stopColor="#f0c040" /></linearGradient>
          <linearGradient id="cop2" x1="0.500" y1="0" x2="0" y2="1"><stop offset="0" stopColor="#a050e8" /><stop offset="1" stopColor="#f07858" /></linearGradient>
        </defs>
      </svg>
      <button type="button" className="flex flex-1 items-center pl-[43px] text-left leading-8">
        <svg viewBox="0 0 38 46" className="mr-[18px] mb-2 h-[46px] w-[38px]" aria-hidden="true">
          <path d="M4 0h22l11 12v29a4 4 0 0 1-4 4H4a4 4 0 0 1-4-4V4a4 4 0 0 1 4-4z" fill="#62b0e8" />
          <path d="M26 0l11 12H26z" fill="#b8e2fb" />
          <path d="M8 28v12M19 34v6M30 22v18" stroke="#2a5fae" strokeWidth="8" strokeLinecap="round" />
        </svg>
        <span className="flex flex-col pb-1">
          <span>Upcoming</span>
          <span className="text-[#5c6066]">Earnings</span>
        </span>
      </button>
      <div className="flex shrink-0 items-center pl-3">
        <button type="button" aria-label="Start" className="mr-[26px]">
          <svg viewBox="0 0 48 48" className="size-12" fill="url(#win)" aria-hidden="true">
            <path d="M1 3a2 2 0 0 1 2-2h20v22H1zM25 1h20a2 2 0 0 1 2 2v20H25zM1 25h22v22H3a2 2 0 0 1-2-2zM25 25h22v20a2 2 0 0 1-2 2H25z" />
          </svg>
        </button>
        <label className="flex h-16 w-[438px] items-center rounded-full border-2 border-[#c3c8dc] bg-[#f4f6fc] pr-2.5 pl-5">
          <svg viewBox="0 0 32 32" className="size-8 shrink-0" fill="none" stroke="#1b1b1b" strokeWidth="3" aria-hidden="true">
            <circle cx="14" cy="14" r="11" />
            <path d="M22 22l8 8" />
          </svg>
          <input aria-label="Taskbar search" placeholder="Search" className="ml-5 w-full min-w-0 bg-transparent text-[26px] outline-none placeholder:text-[#5c6066]" />
          <svg viewBox="0 0 90 52" className="h-[52px] w-[90px] shrink-0" aria-hidden="true">
            <path d="M24 46a26 26 0 1 1 44 0" fill="#fdf6e0" stroke="#f0b070" strokeWidth="2" />
            <path d="M21 46a29 29 0 1 1 50 0" fill="none" stroke="#9cc8e8" strokeWidth="2" />
            <path d="M46 8v32M30 24h32M35 13l22 22M57 13L35 35M40 9l12 30M52 9L40 39M31 18l30 12M61 18L31 30" stroke="#f3c860" strokeWidth="1.500" />
            <circle cx="46" cy="24" r="10" fill="#f5b02e" />
            <path d="M2 42c4-6 10-2 14 0 12 3 22-6 34-8 8 2 12 8 18 8 8-4 14-4 20 0-2 6-8 9-14 9H14C8 51 4 48 2 42z" fill="#7a6858" />
            <path d="M18 51c8-6 24-3 32-8 10 0 16 5 24 8z" fill="#3d4a55" />
          </svg>
        </label>
        <div className="ml-1.5 flex self-stretch">
          <TaskIcon name="Copilot preview">
            <path d="M14 3h14c4 0 5 4 4 8l-6 18c-2 5-4 7-9 7H9c-6 0-7-5-5-11L9 8c1-3 2-5 5-5z" fill="url(#cop)" />
            <path d="M28 3c4 0 5 3 6 8l-8 4-4-4z" fill="#2440c0" />
            <path d="M30 14h10c6 0 7 5 5 10l-4 10c-2 4-4 6-8 6H22z" fill="url(#cop2)" />
            <rect x="12" y="32" width="36" height="15" rx="3" fill="#f5c633" />
            <text x="30" y="45" fontSize="14" fontWeight="700" textAnchor="middle" fill="#1b1b1b">PRE</text>
          </TaskIcon>
          <TaskIcon name="Task view">
            <rect x="0" y="14" width="36" height="31" rx="2" fill="#262626" />
            <rect x="12" y="2" width="36" height="32" rx="2" fill="#f2f2f2" />
            <rect x="12" y="14" width="24" height="20" fill="#a8a8a8" />
          </TaskIcon>
          <TaskIcon name="File Explorer">
            <path d="M2 3h15l6 6v10H0V5z" fill="#d99b2b" />
            <rect x="0" y="8" width="48" height="38" rx="3" fill="#fbc94b" />
            <path d="M8 46V36c0-3 2-5 5-5h22c3 0 5 2 5 5v10z" fill="#2e7fd0" />
            <rect x="15" y="38" width="19" height="3" fill="#1c558f" />
          </TaskIcon>
          <TaskIcon name="Microsoft Edge">
            <circle cx="24" cy="24" r="24" fill="#2874c8" />
            <path d="M2 18C6 6 14 0 25 0c13 0 23 9 23 20 0 8-6 13-13 13-5 0-7-2-6-4 3-3 3-9-2-13C20 10 8 10 2 18z" fill="url(#edge)" />
            <path d="M15 26c-4 10 3 22 15 22 7-1 13-5 16-11-8 5-20 3-23-4-2-5 0-9 3-12-5-1-9 1-11 5z" fill="#1c4f96" />
            <path d="M29 29c-1 2 1 4 6 4 5 0 10-3 13-8v9l-2 3c-7 4-18 3-22-4-1-5 0-9 3-10 4 0 3 4 2 6z" fill="#dfe5f4" />
          </TaskIcon>
          <button type="button" aria-label="Power BI Desktop" className="my-1.5 ml-1 flex w-[78px] flex-col items-center rounded-lg border-2 border-[#d3d7e6] bg-[#e9edf7] pt-3">
            <svg viewBox="0 0 50 48" className="h-12 w-[50px]" aria-hidden="true">
              <rect width="50" height="48" fill="#2b6fcb" />
              <path d="M28 0h16v48H28z" fill="#d9a52e" />
              <path d="M18 12h16v36H18z" fill="#e8be48" />
              <path d="M7 24h17v24H7z" fill="#f7dc72" />
              <path d="M34 12h10v36H34z" fill="#bf8a26" />
            </svg>
            <span className="mt-2 h-1.5 w-8 rounded-full bg-[#2b6fcb]" />
          </button>
        </div>
      </div>
      <div className="flex flex-1 items-center justify-end pr-[42px]">
        <svg viewBox="0 0 24 14" className="mr-9 h-3.5 w-6" fill="none" stroke="#1b1b1b" strokeWidth="2.200" aria-hidden="true"><path d="M2 13L12 2l10 11" /></svg>
        <svg viewBox="0 0 34 34" className="mr-3.5 size-[34px]" fill="none" stroke="#1b1b1b" strokeWidth="2.200" aria-hidden="true">
          <path d="M20 3H2v22h20M8 32h15M12 26v6M19 26v6M25 3h7v9h-7zM28 12v20" />
        </svg>
        <svg viewBox="0 0 34 28" className="mr-3.5 h-7 w-[34px]" fill="none" stroke="#1b1b1b" strokeWidth="2.200" aria-hidden="true">
          <path d="M2 10h5l7-7v22l-7-7H2zM18 9c3 3 3 7 0 10" />
          <path d="M23 5c5 5 5 13 0 18M28 1c7 7 7 19 0 26" stroke="#a8adb8" />
        </svg>
        <svg viewBox="0 0 34 22" className="mr-8 h-[22px] w-[34px]" fill="none" stroke="#1b1b1b" strokeWidth="2.200" aria-hidden="true">
          <rect x="2" y="2" width="26" height="18" rx="4" />
          <path d="M6 6h6v10H6zM30 8v6" fill="#1b1b1b" strokeWidth="3" />
        </svg>
        <div className="mr-[18px] pb-1 text-right leading-8">
          <div>11:48 AM</div>
          <div>6/20/2024</div>
        </div>
        <svg viewBox="0 0 28 30" className="h-[30px] w-7" fill="none" stroke="#1b1b1b" strokeWidth="2.200" aria-hidden="true">
          <path d="M2 23h24l-3-5v-7c0-5-4-9-9-9s-9 4-9 9v7zM10 24c1 5 7 5 8 0" />
        </svg>
      </div>
    </footer>
  );
}

export default function App() {
  return (
    <div className="flex h-screen flex-col overflow-hidden bg-white font-['Open_Sans',sans-serif] text-[#252423]">
      <TitleBar />
      <Ribbon />
      <div className="relative flex min-h-0 flex-1">
        <LeftRail />
        <div className="flex min-w-0 flex-1 flex-col">
          <div className="flex min-h-0 flex-1">
            <Report />
            <aside aria-label="Filters" className="flex w-[66px] shrink-0 flex-col items-center border-l-2 border-[#a19f9d] bg-white pt-[26px]">
              <button type="button" aria-label="Expand filters"><Chevrons /></button>
              <svg viewBox="0 0 24 26" className="mt-[30px] ml-1.5 h-[26px] w-6" fill="none" stroke="#252423" strokeWidth="2.200" aria-hidden="true">
                <path d="M22 2v22L11 16H2v-6h9z" />
              </svg>
              <h2 className="mt-4 text-[29px] leading-9 font-semibold [writing-mode:vertical-rl]">Filters</h2>
            </aside>
          </div>
          <PageTabs />
        </div>
        <aside aria-label="Visualizations" className="flex w-[70px] shrink-0 flex-col items-center border-l-2 border-[#e1dfdd] bg-[#f3f2f1] pt-[26px]">
          <button type="button" aria-label="Expand visualizations"><Chevrons /></button>
          <h2 className="mt-[30px] mr-1 text-[29px] leading-9 font-semibold [writing-mode:vertical-rl]">Visualizations</h2>
        </aside>
        <DataPane />
        <div className="pointer-events-none absolute right-[121px] bottom-[30px] w-[456px] whitespace-nowrap text-[#b9b8b7]">
          <p className="text-[39px] leading-[50px]">Activate Windows</p>
          <p className="text-[28px] leading-[44px]">Go to Settings to activate Windows.</p>
        </div>
      </div>
      <StatusBar />
      <Taskbar />
    </div>
  );
}
